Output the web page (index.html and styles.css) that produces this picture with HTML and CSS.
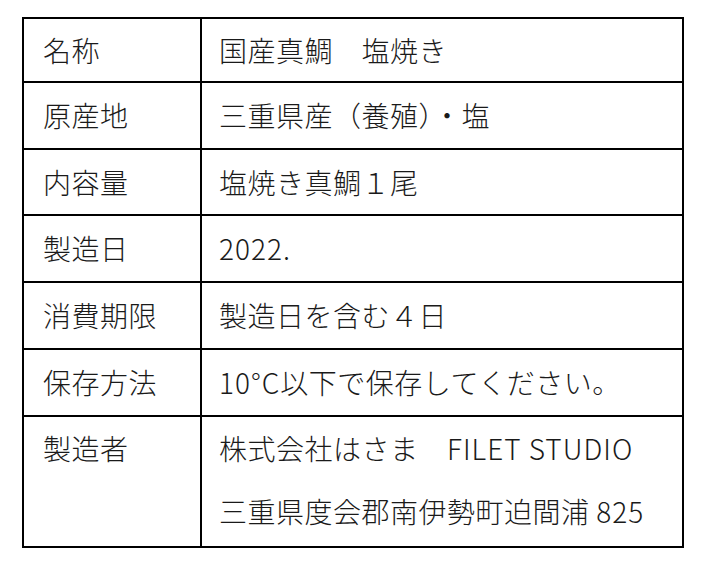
FILE: index.html
```html
<!DOCTYPE html>
<html lang="ja">
<head>
<meta charset="utf-8">
<link rel="stylesheet" href="styles.css">
</head>
<body>
<div class="label-table">
  <div class="cell key r1">名称</div>
  <div class="cell val r1">国産真鯛　塩焼き</div>
  <div class="cell key r2">原産地</div>
  <div class="cell val r2">三重県産（養殖）・塩</div>
  <div class="cell key r3">内容量</div>
  <div class="cell val r3">塩焼き真鯛１尾</div>
  <div class="cell key r4">製造日</div>
  <div class="cell val r4"><span class="latin">2022.</span></div>
  <div class="cell key r5">消費期限</div>
  <div class="cell val r5">製造日を含む４日</div>
  <div class="cell key r6">保存方法</div>
  <div class="cell val r6"><span class="latin">10°C</span>以下で保存してください。</div>
  <div class="cell key last">製造者</div>
  <div class="cell val last">
    <div>株式会社はさま　<span class="latin">FILET STUDIO</span></div>
    <div>三重県度会郡南伊勢町迫間浦 <span class="latin">825</span></div>
  </div>
</div>
</body>
</html>
```

FILE: styles.css
```css
html, body {
  margin: 0;
  padding: 0;
  background: #ffffff;
}

body {
  font-family: "Noto Sans CJK JP", "Noto Sans", sans-serif;
  font-weight: 300;
  font-size: 28px;
  letter-spacing: 0.5px;
  color: #1a1a1a;
}

.label-table {
  margin: 17px 0 0 22px;
  width: 662px;
  box-sizing: border-box;
  border-top: 2px solid #000;
  border-left: 2px solid #000;
  display: grid;
  grid-template-columns: 178px 482px;
  grid-template-rows: 64px 67px 66px 67px 67px 67px 131px;
}

.cell {
  box-sizing: border-box;
  border-right: 2px solid #000;
  border-bottom: 2px solid #000;
  display: flex;
  align-items: center;
  line-height: 63px;
  white-space: nowrap;
}

.key {
  padding-left: 19px;
}

.val {
  padding-left: 17px;
}

.latin {
  letter-spacing: 1px;
}

.cell.last {
  flex-direction: column;
  align-items: flex-start;
  justify-content: flex-start;
}
```
